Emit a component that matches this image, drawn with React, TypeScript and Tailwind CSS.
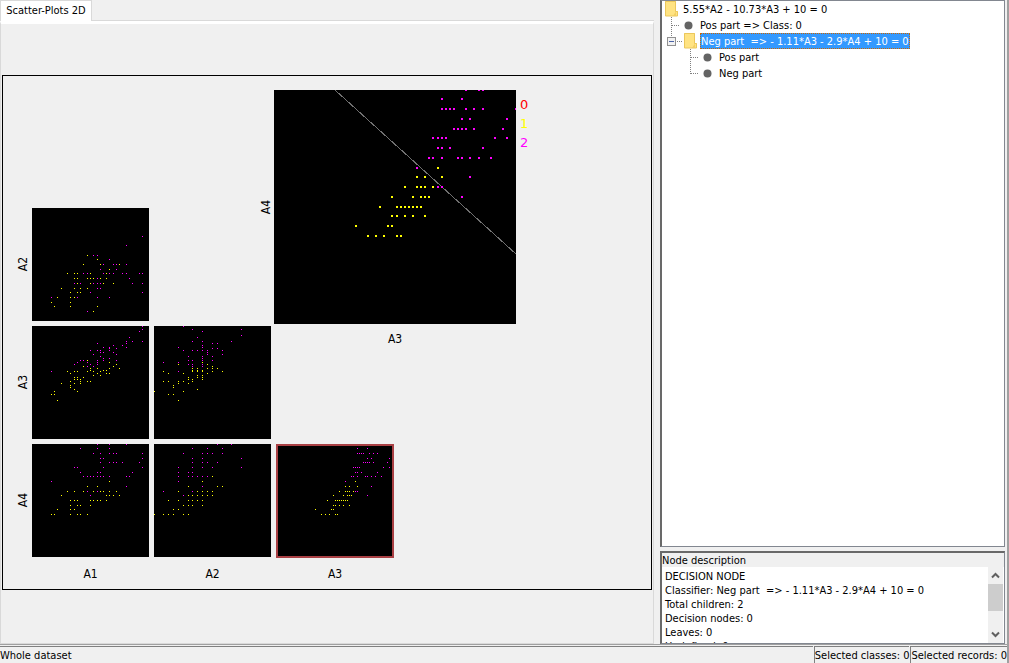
import { useState } from "react";

type Row = [number, ...number[]];
type PlotData = { name: string; magenta: Row[]; yellow: Row[] };

// Each row is [y, x1, x2, ...] in the pixel grid of its plot.
const a1a2: PlotData = {
  name: "A1 by A2",
  magenta: [[28, 110], [37, 94], [47, 61, 65], [51, 77], [56, 71, 81, 84, 94], [61, 68, 84], [65, 51, 55, 71, 77, 81, 90, 94, 107, 110], [70, 65, 97], [75, 42, 48, 61, 65, 68, 100, 110], [80, 65, 68], [84, 58, 110], [89, 19, 45, 65, 77], [103, 55]],
  yellow: [[47, 55], [51, 65], [56, 51, 68, 87], [61, 77], [65, 35, 42, 45, 58, 74], [70, 42, 45, 55, 58, 61, 68, 74], [75, 45, 58, 71, 81], [80, 29, 42, 48, 55], [84, 38, 45, 48], [89, 25, 38, 42], [94, 19, 38], [98, 22, 38, 65], [103, 61]],
};
const a1a3: PlotData = {
  name: "A1 by A3",
  magenta: [[0, 110], [3, 110], [5, 107], [11, 97], [15, 94, 100, 110], [17, 65, 94], [19, 81, 90], [21, 71, 77, 94], [22, 77, 84], [24, 58, 65, 68, 77], [26, 68, 71, 81], [28, 61, 84], [30, 68], [32, 71, 77], [34, 48, 51, 65, 71, 84], [36, 45, 55, 65], [38, 42, 58, 65], [40, 55, 61], [45, 19]],
  yellow: [[34, 55], [36, 77], [38, 84], [40, 51, 81], [42, 58, 65, 77, 87], [44, 58, 71, 74], [45, 35, 42, 45, 55, 61, 68], [47, 38, 65, 74, 77], [49, 61, 68], [51, 42, 45, 51], [53, 42, 45, 48], [55, 38, 48, 55, 58], [57, 29, 42, 48], [59, 38], [61, 38], [63, 42], [65, 22, 45], [68, 19, 22], [74, 25]],
};
const a2a3: PlotData = {
  name: "A2 by A3",
  magenta: [[0, 29], [3, 38, 87], [5, 48], [9, 87], [11, 43], [15, 38, 48, 77], [17, 58, 63], [19, 48], [21, 24, 48], [22, 58, 63], [24, 29, 38, 43, 48, 53, 68], [26, 53], [28, 53, 68], [30, 34, 48, 58], [32, 48], [34, 34, 38, 48, 58], [36, 9, 24], [38, 34, 38, 48], [40, 38, 48], [45, 24]],
  yellow: [[36, 48], [38, 24, 53], [40, 58], [42, 38, 43, 53, 58, 63], [44, 38, 43, 48], [45, 9, 38, 43, 48, 58, 68], [47, 14, 29, 53], [49, 43, 48], [51, 34, 43, 48], [53, 34, 38, 48], [55, 9, 14, 24, 29, 38], [57, 24, 34], [59, 19], [61, 19], [63, 43], [65, 0, 29], [68, 14, 19], [74, 24]],
};
const a1a4: PlotData = {
  name: "A1 by A4",
  magenta: [[0, 65, 77, 94], [4, 48, 65, 77], [9, 61, 68, 77, 81, 84, 110], [14, 68, 71, 110], [18, 68, 77, 81, 84, 90, 107], [23, 42, 45, 71, 110], [28, 48, 65, 68, 100], [32, 51, 55, 58, 61, 65, 68, 71, 77, 94, 97], [37, 19], [42, 94], [47, 55, 65], [51, 58]],
  yellow: [[37, 77], [42, 55, 65], [47, 35, 42, 51, 61, 68, 71, 77, 84], [51, 29, 74, 77, 81, 87], [56, 38, 42, 45, 58, 61, 65, 68, 74], [61, 38, 45, 48, 58], [65, 25, 38, 42], [70, 19, 22, 38, 45, 48, 55]],
};
const a2a4: PlotData = {
  name: "A2 by A4",
  magenta: [[0, 63, 77], [4, 38, 53, 68], [9, 29, 48, 53, 58, 68], [14, 38, 48, 87], [18, 38, 48, 53, 63], [23, 24, 38, 48, 58, 87], [28, 24, 34, 38], [32, 24, 34, 38, 43, 48, 53], [37, 24], [42, 48], [47, 9, 38], [51, 29]],
  yellow: [[32, 58], [37, 48], [42, 34, 63, 68], [47, 24, 43, 48, 53, 58], [51, 34, 38, 43, 48, 53, 58], [56, 14, 24, 34, 38, 43, 48], [61, 29, 34, 38, 48], [65, 19, 24], [70, 0, 9, 14, 19, 29, 34]],
};
const a3a4: PlotData = {
  name: "A3 by A4",
  magenta: [[4, 81, 91], [9, 81, 83, 85, 87, 93, 97, 101], [14, 91, 95, 113], [18, 87, 89, 91, 93, 97, 111], [23, 77, 79, 81, 83, 107, 113], [28, 79, 81, 85, 101], [32, 75, 77, 81, 89, 91, 95, 99, 105], [37, 69], [42, 95], [47, 79, 81], [51, 91]],
  yellow: [[37, 79], [42, 69, 73, 81], [47, 63, 69, 71, 73, 77], [51, 57, 67, 71, 73, 75], [56, 51, 59, 61, 63, 65, 67, 69, 71], [61, 57, 59, 63, 67, 73], [65, 39, 55, 57], [70, 45, 49, 53, 59, 61]],
};
const detail: PlotData = {
  name: "A3 by A4, enlarged",
  magenta: [[-1, 191, 204, 208], [8, 167, 187], [18, 167, 171, 175, 179, 191, 199, 208, 241], [28, 187, 195, 232], [38, 179, 183, 187, 191, 199, 228], [47, 158, 163, 167, 171, 220, 232], [57, 163, 167, 175, 208], [67, 154, 158, 167, 183, 187, 195, 204, 216], [77, 142], [86, 195], [96, 163, 167], [106, 187]],
  yellow: [[77, 163], [86, 142, 150, 167], [96, 130, 142, 146, 150, 158], [106, 117, 138, 146, 150, 154], [116, 105, 122, 126, 130, 134, 138, 142, 146], [125, 117, 122, 130, 138, 150], [135, 81, 113, 117], [145, 93, 101, 109, 122, 126]],
};

function Dots({ data, size }: { data: PlotData; size: number }) {
  const path = (rows: Row[]) =>
    rows.map(([y, ...xs]) => xs.map((x) => `M${x} ${y}h${size}v${size}h-${size}z`).join("")).join("");
  return (
    <>
      <path d={path(data.magenta)} fill="#ff00ff" />
      <path d={path(data.yellow)} fill="#ffff00" />
    </>
  );
}

function SmallPlot({ data, place, selected, onSelect }: { data: PlotData; place: string; selected?: boolean; onSelect: () => void }) {
  return (
    <button type="button" aria-label={data.name} aria-pressed={selected} onClick={onSelect} className={`${place} block bg-black`}>
      <svg width={selected ? 118 : 117} height={selected ? 114 : 113} shapeRendering="crispEdges" className="block max-w-none">
        <Dots data={data} size={1} />
        {selected && <rect x="1" y="1" width="116" height="112" fill="none" stroke="#a94044" strokeWidth="2" />}
      </svg>
    </button>
  );
}

const axis = "text-[12px] leading-4 text-black";

function SideLabel({ text, place }: { text: string; place: string }) {
  return (
    <div className={`${place} ${axis} -mr-1 flex items-center justify-end`}>
      <span className="-rotate-180 [writing-mode:vertical-rl]">{text}</span>
    </div>
  );
}

function Matrix() {
  const [selected, setSelected] = useState("A3 by A4");
  const cell = (data: PlotData, place: string) => (
    <SmallPlot data={data} place={place} selected={selected === data.name} onSelect={() => setSelected(data.name)} />
  );
  return (
    <div className="grid w-full grid-cols-[24px_117px_117px_118px_1fr] grid-rows-[repeat(4,113px)_16px] gap-[5px] border border-black pt-3.5 pb-[11px]">
      <SideLabel text="A2" place="col-start-1 row-start-2" />
      <SideLabel text="A3" place="col-start-1 row-start-3" />
      <SideLabel text="A4" place="col-start-1 row-start-4" />
      <div className="col-start-3 col-end-6 row-start-1 row-end-4 flex items-start pl-[104px]">
        <div className={`${axis} flex h-[234px] w-4 items-center`}>
          <span className="-rotate-180 [writing-mode:vertical-rl]">A4</span>
        </div>
        <figure className="flex flex-col items-center gap-[7px]">
          <svg width="242" height="234" role="img" aria-label={detail.name} shapeRendering="crispEdges" className="block bg-black">
            <path d="M61 0L242 164" stroke="#707070" strokeWidth="1" />
            <Dots data={detail} size={2} />
          </svg>
          <figcaption className={axis}>A3</figcaption>
        </figure>
        <ul className="pt-[5px] pl-1 font-['DejaVu_Sans',sans-serif] text-[13px] leading-[19px]">
          <li className="text-[#ff0000]">0</li>
          <li className="text-[#ffff00]">1</li>
          <li className="text-[#ff00ff]">2</li>
        </ul>
      </div>
      {cell(a1a2, "col-start-2 row-start-2")}
      {cell(a1a3, "col-start-2 row-start-3")}
      {cell(a2a3, "col-start-3 row-start-3")}
      {cell(a1a4, "col-start-2 row-start-4")}
      {cell(a2a4, "col-start-3 row-start-4")}
      {cell(a3a4, "col-start-4 row-start-4")}
      <div className={`${axis} col-start-2 row-start-5 pt-1 text-center`}>A1</div>
      <div className={`${axis} col-start-3 row-start-5 pt-1 text-center`}>A2</div>
      <div className={`${axis} col-start-4 row-start-5 pt-1 text-center`}>A3</div>
    </div>
  );
}

function Folder() {
  return (
    <svg width="13" height="16" className="block shrink-0">
      <path d="M0 0h11v10h2v5H0z" fill="#ffe382" />
      <path d="M.5 .5h10v10h2v4.500H.5z" fill="none" stroke="#ebc75c" />
      <path d="M8 15l3-4.500V15z" fill="#f3cf63" />
    </svg>
  );
}

function Bullet() {
  return (
    <svg width="9" height="9" className="block shrink-0">
      <circle cx="4.500" cy="4.500" r="4" fill="#646464" />
    </svg>
  );
}

function Branch({ last }: { last?: boolean }) {
  return (
    <svg width="9" height="16" shapeRendering="crispEdges" className="block shrink-0">
      <path d={last ? "M.5 0V9M1 8.500H9" : "M.5 0V16M1 8.500H9"} stroke="#808080" strokeDasharray="1 1" fill="none" />
    </svg>
  );
}

function Leaf({ text }: { text: string }) {
  return (
    <button type="button" className="flex h-4 items-center gap-[7px] pl-1">
      <Bullet />
      <span className="pt-[2px]">{text}</span>
    </button>
  );
}

function Tree() {
  return (
    <ul className="min-h-0 flex-1 overflow-hidden border-t border-r border-b border-l-2 border-[#828790] border-l-[#696969] bg-white pl-[3px]">
      <li>
        <button type="button" className="flex h-4 items-center gap-[5px] whitespace-pre">
          <Folder />
          <span className="pt-[2px]">5.55*A2 - 10.73*A3 + 10 = 0</span>
        </button>
        <ul>
          <li className="flex h-4 items-center pl-[6px]">
            <Branch />
            <Leaf text="Pos part => Class: 0" />
          </li>
          <li>
            <div className="flex h-4 items-center pl-px">
              <button type="button" aria-label="Collapse" className="block">
                <svg width="18" height="16" shapeRendering="crispEdges" className="block">
                  <path d="M5.500 0V4M11 8.500H17" stroke="#808080" strokeDasharray="1 1" />
                  <rect x="1.500" y="4.500" width="8" height="8" fill="#f2f2f2" stroke="#919191" />
                  <path d="M3 8.500H8" stroke="#4b63a7" />
                </svg>
              </button>
              <Folder />
              <button type="button" className="ml-[3px] h-4 border border-dotted border-[#cc6600] bg-[#3399ff] pt-px leading-[14px] whitespace-pre text-white">{"Neg part  => - 1.11*A3 - 2.9*A4 + 10 = 0"}</button>
            </div>
            <ul className="pl-[25px]">
              <li className="flex h-4 items-center">
                <Branch />
                <Leaf text="Pos part" />
              </li>
              <li className="flex h-4 items-center">
                <Branch last />
                <Leaf text="Neg part" />
              </li>
            </ul>
          </li>
        </ul>
      </li>
    </ul>
  );
}

const description = `DECISION NODE
Classifier: Neg part  => - 1.11*A3 - 2.9*A4 + 10 = 0
Total children: 2
Decision nodes: 0
Leaves: 0
Undefined: 0`;

function Arrow({ d, label }: { d: string; label: string }) {
  return (
    <button type="button" aria-label={label} className="flex h-[17px] items-center justify-center">
      <svg width="9" height="7" className="block"><path d={d} fill="none" stroke="#606060" strokeWidth="2" /></svg>
    </button>
  );
}

export default function App() {
  return (
    <div className="flex h-screen flex-col overflow-hidden bg-[#f0f0f0] font-['DejaVu_Sans_Condensed','DejaVu_Sans',sans-serif] text-[11px] leading-[14px] text-black">
      <div className="flex min-h-0 flex-1 border-r-2 border-[#a0a0a0] pr-[2px]">
        <section className="flex min-w-0 flex-1 flex-col">
          <div role="tablist" className="flex h-[21px]">
            <button type="button" role="tab" aria-selected="true" className="w-[92px] border-t border-r border-l border-[#d9d9d9] bg-white whitespace-nowrap">Scatter-Plots 2D</button>
            <div className="flex-1 border-b border-[#d9d9d9]" />
          </div>
          <div className="flex min-h-0 flex-1 items-center border-t-[3px] border-r border-b border-l border-t-white border-r-[#d9d9d9] border-b-[#d9d9d9] border-l-[#d9d9d9] px-px pb-[2px]">
            <Matrix />
          </div>
        </section>
        <aside className="ml-[6px] flex w-[345px] flex-col gap-1">
          <Tree />
          <section className="flex h-[93px] flex-col border-t-2 border-r border-b border-l-2 border-[#828790] border-t-[#696969] border-l-[#696969]">
            <label htmlFor="description" className="h-[14px] shrink-0 pt-px">Node description</label>
            <div className="flex min-h-0 flex-1 bg-white">
              <textarea id="description" readOnly value={description} className="min-w-0 flex-1 resize-none overflow-hidden px-[3px] pt-[3px] whitespace-pre outline-none" />
              <div className="mr-px flex w-[15px] flex-col bg-[#f0f0f0]">
                <Arrow label="Scroll up" d="M1 5.500L4.500 2L8 5.500" />
                <div className="h-[27px] bg-[#cdcdcd]" />
                <div className="flex-1" />
                <Arrow label="Scroll down" d="M1 1.500L4.500 5L8 1.500" />
              </div>
            </div>
          </section>
        </aside>
      </div>
      <footer className="flex h-[19px] shrink-0 gap-px border-t border-r-2 border-[#a0a0a0] pt-px">
        <div className="flex-1 border-t border-[#808080] pt-[2px]">Whole dataset</div>
        <div className="border-t border-l border-[#808080] pt-[2px] whitespace-nowrap">Selected classes: 0</div>
        <div className="border-t border-l border-[#808080] pt-[2px] whitespace-nowrap">Selected records: 0</div>
      </footer>
    </div>
  );
}
